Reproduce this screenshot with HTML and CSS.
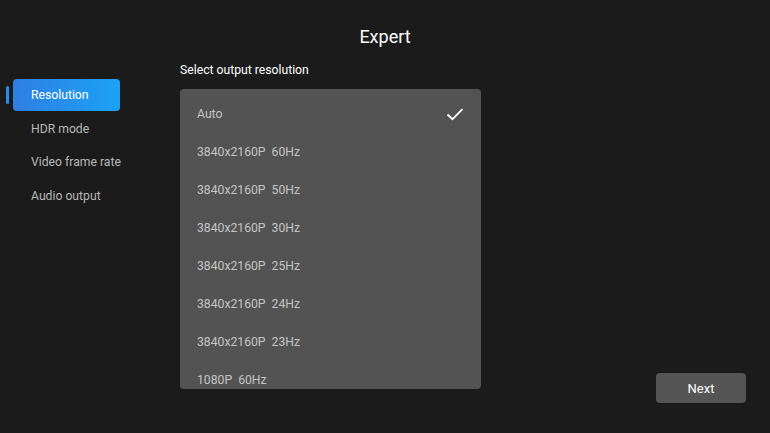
FILE: index.html
```html
<!DOCTYPE html>
<html>
<head>
<meta charset="utf-8">
<link rel="stylesheet" href="styles.css">
</head>
<body>
<div class="screen">
  <h1 class="title">Expert</h1>
  <div class="main">
    <nav class="sidebar">
      <div class="nav-item active"><span class="indicator"></span><span class="pill">Resolution</span></div>
      <div class="nav-item"><span class="pill">HDR mode</span></div>
      <div class="nav-item"><span class="pill">Video frame rate</span></div>
      <div class="nav-item"><span class="pill">Audio output</span></div>
    </nav>
    <section class="content">
      <div class="label">Select output resolution</div>
      <div class="list">
        <div class="row"><span>Auto</span>
          <svg class="check" width="18" height="13" viewBox="0 0 18 13"><path d="M1.5 6.5 L6.5 11.2 L16.5 1.2" fill="none" stroke="#ffffff" stroke-width="1.8"/></svg>
        </div>
        <div class="row"><span>3840x2160P&nbsp; 60Hz</span></div>
        <div class="row"><span>3840x2160P&nbsp; 50Hz</span></div>
        <div class="row"><span>3840x2160P&nbsp; 30Hz</span></div>
        <div class="row"><span>3840x2160P&nbsp; 25Hz</span></div>
        <div class="row"><span>3840x2160P&nbsp; 24Hz</span></div>
        <div class="row"><span>3840x2160P&nbsp; 23Hz</span></div>
        <div class="row"><span>1080P&nbsp; 60Hz</span></div>
      </div>
    </section>
    <div class="actions">
      <button class="next">Next</button>
    </div>
  </div>
</div>
</body>
</html>
```

FILE: styles.css
```css
html, body {
  margin: 0;
  padding: 0;
  background: #1b1b1b;
  width: 770px;
  height: 433px;
  overflow: hidden;
  font-family: Roboto, "Noto Sans", sans-serif;
}
.screen {
  width: 770px;
  height: 433px;
  display: flex;
  flex-direction: column;
}
.title {
  margin: 25px 0 0 0;
  height: 24px;
  line-height: 24px;
  font-size: 18px;
  font-weight: 400;
  color: #ffffff;
  text-align: center;
}
.main {
  display: flex;
  flex: 1;
  margin-top: 8px;
}
.sidebar {
  width: 120px;
  padding-top: 22px;
  display: flex;
  flex-direction: column;
  gap: 1.5px;
}
.nav-item {
  position: relative;
  height: 32px;
  padding-left: 13px;
  display: flex;
  align-items: center;
}
.indicator {
  position: absolute;
  left: 6px;
  top: 7px;
  width: 3px;
  height: 18px;
  border-radius: 2px;
  background: #1f8ef0;
}
.pill {
  flex: 1;
  height: 32px;
  line-height: 33px;
  padding-left: 18px;
  border-radius: 4px;
  font-size: 12.2px;
  color: #b8b8b8;
  white-space: nowrap;
}
.nav-item.active .pill {
  background: linear-gradient(90deg, #2f7fe2 0%, #1ba2f6 100%);
  color: #ffffff;
}
.content {
  margin-left: 60px;
  width: 301px;
}
.label {
  height: 20px;
  line-height: 20px;
  margin-top: 3px;
  font-size: 12.2px;
  color: #ffffff;
}
.list {
  margin-top: 9px;
  height: 300px;
  background: #535353;
  border-radius: 4px;
  overflow: hidden;
  padding-top: 6px;
  box-sizing: border-box;
}
.row {
  height: 38px;
  padding: 0 17px 0 17px;
  display: flex;
  align-items: center;
  justify-content: space-between;
  font-size: 12.2px;
  color: #c4c4c4;
}
.check {
  display: block;
}
.actions {
  flex: 1;
  display: flex;
  justify-content: flex-end;
  align-items: flex-end;
  padding: 0 24px 30px 0;
}
.next {
  width: 90px;
  height: 30px;
  border: none;
  border-radius: 4px;
  background: #555555;
  color: #ffffff;
  font-family: Roboto, "Noto Sans", sans-serif;
  font-size: 13px;
  padding: 0;
}
```
